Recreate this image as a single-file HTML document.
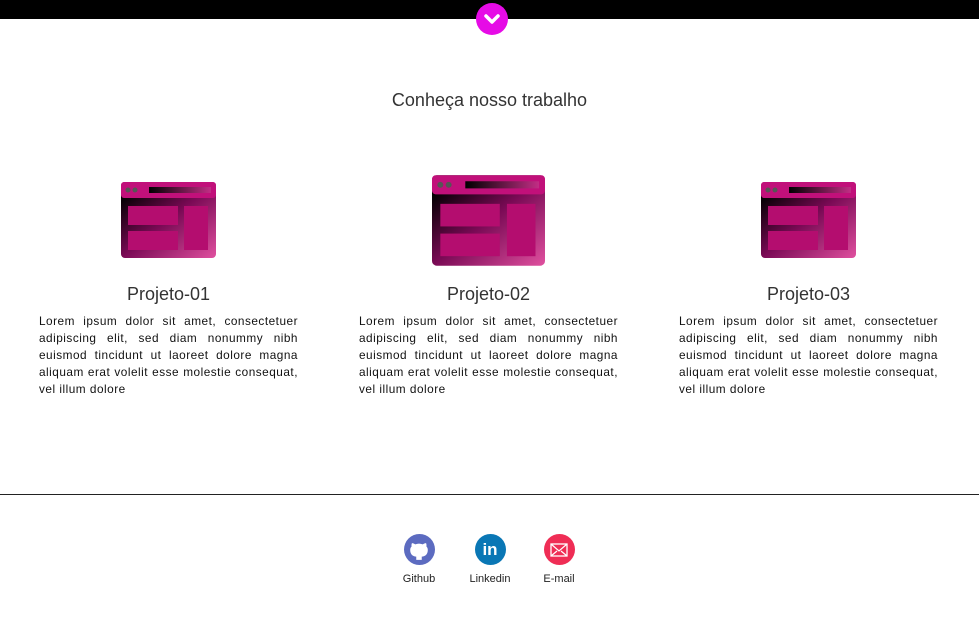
<!DOCTYPE html>
<html><head><meta charset="utf-8"><style>
body{margin:0;width:979px;height:626px;background:#fff;font-family:"Liberation Sans",sans-serif;color:#111;position:relative;overflow:hidden}
.bar{position:absolute;left:0;top:0;width:979px;height:19px;background:#000}
.btn{position:absolute;left:476px;top:3px;width:32px;height:32px;border-radius:50%;background:#e60be6}
h2{position:absolute;top:90px;left:0;width:979px;text-align:center;margin:0;font-weight:normal;font-size:18px;color:#333}
.col{position:absolute;top:0;width:259px}
.col h3{position:absolute;top:284px;left:0;width:259px;text-align:center;margin:0;font-weight:normal;font-size:18px;color:#333}
.col p{position:absolute;top:313px;left:0;width:259px;margin:0;font-size:11.8px;letter-spacing:0.5px;line-height:17px;text-align:justify;color:#111}
.col svg{position:absolute}
.hr{position:absolute;top:494px;left:0;width:979px;height:1px;background:#222}
.s{position:absolute;top:534px;width:60px;text-align:center;font-size:11px;color:#222}
.s .c{width:31px;height:31px;border-radius:50%;margin:0 auto 8px;display:flex;align-items:center;justify-content:center}
</style></head><body>
<div class="bar"></div>
<div class="btn"><svg width="32" height="32"><path d="M10 13 L16 19 L22 13" stroke="#fff" stroke-width="3.5" fill="none" stroke-linecap="round" stroke-linejoin="round"/></svg></div>
<h2>Conheça nosso trabalho</h2>
<svg width="0" height="0" style="position:absolute"><defs><linearGradient id="g" x1="0" y1="0" x2="1" y2="1"><stop offset="0.1" stop-color="#000"/><stop offset="0.5" stop-color="#7a0a55"/><stop offset="1" stop-color="#e0509f"/></linearGradient><linearGradient id="g2" x1="0" y1="0" x2="1" y2="0"><stop offset="0" stop-color="#000"/><stop offset="1" stop-color="#c22d85"/></linearGradient></defs></svg>
<div class="col" style="left:39px">
<svg style="left:82px;top:182px" width="95" height="76" viewBox="0 0 95 76"><rect width="95" height="76" rx="4" fill="url(#g)"/><rect width="95" height="16" rx="3" fill="#c1107a"/><circle cx="7" cy="8" r="2.5" fill="#555"/><circle cx="14" cy="8" r="2.5" fill="#555"/><rect x="28" y="5" width="62" height="6" fill="url(#g2)"/><rect x="7" y="24" width="50" height="19" fill="#b40d6f"/><rect x="7" y="49" width="50" height="19" fill="#b40d6f"/><rect x="63" y="24" width="24" height="44" fill="#b40d6f"/></svg>
<h3>Projeto-01</h3>
<p>Lorem ipsum dolor sit amet, consectetuer adipiscing elit, sed diam nonummy nibh euismod tincidunt ut laoreet dolore magna aliquam erat volelit esse molestie consequat, vel illum dolore</p></div>
<div class="col" style="left:359px">
<svg style="left:73px;top:175px" width="113" height="91" viewBox="0 0 95 76"><rect width="95" height="76" rx="4" fill="url(#g)"/><rect width="95" height="16" rx="3" fill="#c1107a"/><circle cx="7" cy="8" r="2.5" fill="#555"/><circle cx="14" cy="8" r="2.5" fill="#555"/><rect x="28" y="5" width="62" height="6" fill="url(#g2)"/><rect x="7" y="24" width="50" height="19" fill="#b40d6f"/><rect x="7" y="49" width="50" height="19" fill="#b40d6f"/><rect x="63" y="24" width="24" height="44" fill="#b40d6f"/></svg>
<h3>Projeto-02</h3>
<p>Lorem ipsum dolor sit amet, consectetuer adipiscing elit, sed diam nonummy nibh euismod tincidunt ut laoreet dolore magna aliquam erat volelit esse molestie consequat, vel illum dolore</p></div>
<div class="col" style="left:679px">
<svg style="left:82px;top:182px" width="95" height="76" viewBox="0 0 95 76"><rect width="95" height="76" rx="4" fill="url(#g)"/><rect width="95" height="16" rx="3" fill="#c1107a"/><circle cx="7" cy="8" r="2.5" fill="#555"/><circle cx="14" cy="8" r="2.5" fill="#555"/><rect x="28" y="5" width="62" height="6" fill="url(#g2)"/><rect x="7" y="24" width="50" height="19" fill="#b40d6f"/><rect x="7" y="49" width="50" height="19" fill="#b40d6f"/><rect x="63" y="24" width="24" height="44" fill="#b40d6f"/></svg>
<h3>Projeto-03</h3>
<p>Lorem ipsum dolor sit amet, consectetuer adipiscing elit, sed diam nonummy nibh euismod tincidunt ut laoreet dolore magna aliquam erat volelit esse molestie consequat, vel illum dolore</p></div>
<div class="hr"></div>
<div class="s" style="left:389px"><div class="c" style="background:#5c6bc0"><svg width="22" height="22" viewBox="0 0 20 20"><path d="M7.5 19v-3c-3 0-5.5-2-5.5-6 0-1.5.5-2.5 1.3-3.3-.2-.8-.2-2 .3-3 1 0 2 .5 3 1.2a9 9 0 0 1 6.8 0c1-.7 2-1.2 3-1.2.5 1 .5 2.2.3 3 .8.8 1.3 1.8 1.3 3.3 0 4-2.5 6-5.5 6v3z" fill="#fff"/></svg></div>Github</div>
<div class="s" style="left:460px"><div class="c" style="background:#0a77b5;color:#fff;font-weight:bold;font-size:17px">in</div>Linkedin</div>
<div class="s" style="left:529px"><div class="c" style="background:#ef2d55"><svg width="18" height="14"><rect x="1" y="1" width="16" height="12" fill="none" stroke="#fff" stroke-width="1.3"/><path d="M1 1l8 7 8-7M1 13l6-5M17 13l-6-5" stroke="#fff" stroke-width="1.2" fill="none"/></svg></div>E-mail</div>
</body></html>
